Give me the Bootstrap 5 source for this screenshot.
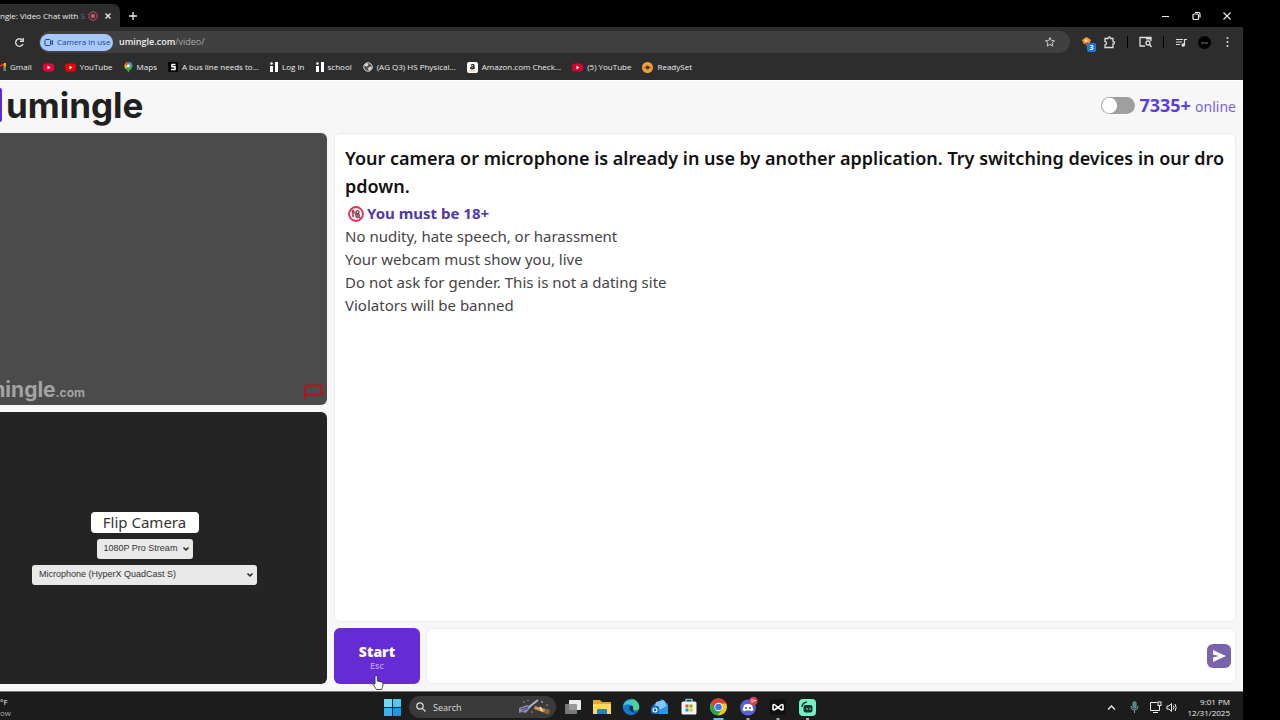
<!DOCTYPE html>
<html lang="en">
<head>
<meta charset="utf-8">
<meta name="viewport" content="width=device-width, initial-scale=1">
<title>umingle: Video Chat with Strangers</title>
<link href="https://cdn.jsdelivr.net/npm/bootstrap@5.3.0/dist/css/bootstrap.min.css" rel="stylesheet">
<style>
  body { background: #000; font-family: "Noto Sans", "Open Sans", sans-serif; }
  svg { display: block; flex: none; }
  button { border: 0; background: none; padding: 0; color: inherit; }
  a { color: inherit; text-decoration: none; }
  .screen { min-height: 100vh; margin-right: 37px; }

  /* browser chrome */
  .chrome { font-family: "Open Sans", "Noto Sans", sans-serif; font-size: 8px; line-height: 12px; color: #eee; }
  .tabstrip { height: 27px; background: #000; padding-top: 4px; }
  .tab { width: 120px; background: #2d2d2d; border-radius: 0 7px 0 0; padding-right: 7px; gap: 6px; }
  .tab-title { width: 82px; white-space: nowrap; font-weight: 500; }
  .winbtns { gap: 20px; padding-right: 11px; }
  .toolbar { height: 27px; background: #2d2d2d; padding: 3px 10px 0 14px; gap: 11px; }
  .address { background: #404040; border-radius: 12px; height: 22px; padding: 0 14px 0 1px; gap: 6px; margin-left: 3px; }
  .campill { background: #a8c7fa; color: #24498c; border-radius: 9px; height: 17px; padding: 0 4px; gap: 3px; width: 73px; }
  .url { font-size: 9px; }
  .url-path { color: #aaa; }
  .sep { width: 1px; height: 12px; background: #000; }
  .extbadge { right: -4px; bottom: -4px; background: #1f74e8; color: #fff; width: 9px; height: 9px; border-radius: 2px; font-size: 7px; line-height: 9px; font-weight: 700; text-align: center; }
  .bookmarks { height: 26px; background: #2d2d2d; gap: 11px; font-weight: 500; white-space: nowrap; }
  .bookmarks a { gap: 4px; }

  /* site */
  .site { background: #f7f7f7; border-top: 1px solid #fff; padding: 0 7px 7px 0; }
  .site-head { height: 52px; padding-bottom: 4px; }
  .logo-bar { width: 2px; height: 34px; background: #5a2bd8; border-radius: 0 2px 2px 0; }
  .logo-text { font-family: Inter, "Open Sans", sans-serif; font-weight: 700; font-size: 35px; line-height: 40px; color: #202020; }
  .switch { width: 34px !important; height: 17px; margin: 0 !important; border: 0; background-color: #9f9f9f; background-image: url("data:image/svg+xml,%3csvg xmlns='http://www.w3.org/2000/svg' viewBox='-4 -4 8 8'%3e%3ccircle r='3.6' fill='%23fff'/%3e%3c/svg%3e") !important; }
  .count { color: #5a3fd0; font-size: 18px; line-height: 24px; font-weight: 700; }
  .online { color: #7a62d8; font-size: 14px; line-height: 20px; }
  .main-area { gap: 7px; }
  .videos { width: 327px; gap: 7px; }
  .videos > div { flex: 1 1 50%; }
  .remote { background: #4b4b4b; border-radius: 0 6px 6px 0; padding: 0 4px 4px 0; }
  .watermark { width: 85px; font-family: Inter, sans-serif; color: #a3a3a3; font-weight: 700; font-size: 21px; line-height: 16px; white-space: nowrap; overflow-x: clip; }
  .watermark span { font-size: 12px; }
  .local { background: #242424; border-radius: 0 6px 6px 0; padding-right: 38px; gap: 6px; }
  .flip { background: #fff; color: #333; border-radius: 4px; width: 108px; height: 21px; font-size: 15px; line-height: 21px; }
  .picker { appearance: none; font-family: "Liberation Sans", Arial, sans-serif; font-size: 9px; height: 20px; border: 0; border-radius: 3px; color: #333; padding: 1px 7px 0; background: #e9e9e9 url("data:image/svg+xml,%3csvg xmlns='http://www.w3.org/2000/svg' viewBox='0 0 8 6' fill='none' stroke='%23222' stroke-width='1.5'%3e%3cpath d='M1.500 1.500L4 4l2.500-2.500'/%3e%3c/svg%3e") no-repeat right 3px center / 8px 6px; }
  .cam { width: 96px; }
  .mic { width: 225px; }
  .panel { background: #fff; border: 1px solid #ececec; border-radius: 6px; }
  .chat { padding: 10px; font-size: 15px; line-height: 23px; color: #444; }
  .alert-line { font-size: 18px; line-height: 28px; font-weight: 600; color: #111; word-break: break-all; }
  .rule { color: #4f38ae; font-weight: 700; gap: 3px; padding: 2px 0 0 3px; }
  .composer { height: 56px; gap: 6px; margin-top: 6px; }
  .start { width: 86px; background: #652bd5; border-radius: 6px; color: #fff; font-weight: 800; font-size: 14px; line-height: 16px; padding-top: 4px; font-family: "Open Sans", sans-serif; }
  .start small { font-size: 9px; line-height: 12px; color: #b89bee; font-weight: 600; }
  .message { border: 0; outline: 0; resize: none; background: transparent; }
  .send { width: 24px; height: 24px; background: #7b62ad; border-radius: 6px; margin-right: 4px; }
  .pointer { left: 38px; top: 46px; z-index: 2; }

  /* taskbar */
  .taskbar { height: 29px; background: #1c1c1c; border-top: 1px solid #777; color: #eee; font-size: 8px; line-height: 11px; font-family: "Open Sans", sans-serif; padding: 2px 13px 0 0; }
  .weather { flex: 0 0 384px; }
  .weather .dim { color: #aaa; }
  .apps { gap: 11px; }
  .searchbox { width: 147px; height: 22px; background: #3a3a3a; border-radius: 11px; padding: 0 3px 0 7px; gap: 7px; margin: 0 -3px; }
  .searchbox input { width: 78px; background: none; border: 0; padding: 0; color: #ddd; font-size: 9px; outline: 0; }
  .searchbox input::placeholder { color: #ddd; }
  .tray { gap: 10px; }
</style>
</head>
<body>
<div class="screen d-flex flex-column overflow-hidden">
  <header class="chrome">
    <div class="tabstrip d-flex">
      <div class="tab d-flex align-items-center">
        <div class="tab-title text-end">ngle: Video Chat with <span class="text-secondary">S</span></div>
        <svg width="10" height="10" viewBox="0 0 10 10"><circle cx="5" cy="5" r="4.2" fill="none" stroke="#c5566c"/><rect x="3" y="3" width="4" height="4" rx="1" fill="#c5566c"/></svg>
        <button aria-label="Close tab"><svg width="8" height="8" viewBox="0 0 8 8" stroke="#eee" stroke-width="1.3"><path d="M1.5 1.5l5 5m0-5l-5 5"/></svg></button>
      </div>
      <button class="ms-2" aria-label="New tab"><svg width="10" height="10" viewBox="0 0 10 10" stroke="#eee" stroke-width="1.3"><path d="M5 1v8M1 5h8"/></svg></button>
      <div class="winbtns d-flex align-items-center ms-auto">
        <button aria-label="Minimize"><svg width="11" height="10" viewBox="0 0 11 10" stroke="#eee"><path d="M2 5.5h7"/></svg></button>
        <button aria-label="Restore"><svg width="11" height="10" viewBox="0 0 11 10" stroke="#eee" fill="none" stroke-width="1.2"><rect x="2" y="3" width="5.5" height="5.5" rx="1"/><path d="M4 1.5h3.5a1.5 1.5 0 0 1 1.500 1.500v3.500"/></svg></button>
        <button aria-label="Close"><svg width="10" height="10" viewBox="0 0 10 10" stroke="#eee" stroke-width="1.1"><path d="M1.500 1.500l7 7m0-7l-7 7"/></svg></button>
      </div>
    </div>
    <div class="toolbar d-flex align-items-center">
      <button aria-label="Reload"><svg width="11" height="11" viewBox="0 0 11 11" fill="none" stroke="#ddd" stroke-width="1.400"><path d="M9 7a3.800 3.800 0 1 1-.6-3.900"/><path d="M9.200 1v3.300H6" /></svg></button>
      <div class="address d-flex align-items-center flex-grow-1">
        <button class="campill d-flex align-items-center text-nowrap"><svg width="10" height="9" viewBox="0 0 10 9" fill="none" stroke="#24498c"><rect x="1" y="1.500" width="5.500" height="6" rx="1"/><path d="M6.500 4l2-1.500v4L6.500 5"/></svg>Camera in use</button>
        <div class="url flex-grow-1"><span class="fw-semibold">umingle.com</span><span class="url-path">/video/</span></div>
        <button aria-label="Bookmark"><svg width="12" height="12" viewBox="0 0 12 12" fill="none" stroke="#ccc"><path d="M6 1.500l1.300 3 3.200.3-2.400 2.100.7 3.200L6 8.400l-2.800 1.700.7-3.200-2.400-2.100 3.200-.3z"/></svg></button>
      </div>
      <button class="position-relative" aria-label="Extension"><svg width="11" height="11" viewBox="0 0 11 11"><path d="M5.500 0L10 3 8 7H3L1 3z" fill="#f0a42c"/><path d="M3 4l3 6 2-4z" fill="#d8452f"/><circle cx="5" cy="4" r="1.500" fill="#ffe08a"/></svg><span class="extbadge position-absolute">3</span></button>
      <button aria-label="Extensions"><svg width="13" height="13" viewBox="0 0 13 13" fill="none" stroke="#ddd" stroke-width="1.300"><path d="M2 2.500h3c0-2 2.500-2 2.500 0H10v3c2 0 2 2.500 0 2.500v3.500H2V9c2 0 2-3.500 0-3.500z"/></svg></button>
      <span class="sep"></span>
      <button aria-label="Side search"><svg width="13" height="12" viewBox="0 0 13 12" fill="none" stroke="#ddd" stroke-width="1.300"><path d="M6 10H1V1.500h11V5"/><path d="M7 2.500h5" stroke-width="2"/><circle cx="9" cy="7" r="2"/><path d="M10.500 8.500l2 2.500"/></svg></button>
      <span class="sep"></span>
      <button aria-label="Media"><svg width="12" height="11" viewBox="0 0 12 11" fill="none" stroke="#ddd" stroke-width="1.200"><path d="M1 2.500h7M1 5h6M1 7.500h4M9.500 8V2.500H12"/><circle cx="8.300" cy="8" r="1.200" fill="#ddd"/></svg></button>
      <button aria-label="Profile"><svg width="13" height="13" viewBox="0 0 13 13"><circle cx="6.500" cy="6.500" r="6.500" fill="#000"/><path d="M3 7h7" stroke="#777"/></svg></button>
      <button aria-label="Menu"><svg width="11" height="12" viewBox="0 0 11 12" fill="#ddd"><circle cx="5.500" cy="2" r="1"/><circle cx="5.500" cy="6" r="1"/><circle cx="5.500" cy="10" r="1"/></svg></button>
    </div>
    <nav class="bookmarks d-flex align-items-center">
      <a href="#" class="d-flex align-items-center"><svg width="6" height="9" viewBox="0 0 6 9"><path d="M0 3l4-2v7" fill="none" stroke="#e34133" stroke-width="1.500"/><path d="M5 1v7" stroke="#34a853" stroke-width="2"/><path d="M4 0h2v3l-2 1z" fill="#fbbc04"/></svg>Gmail</a>
      <a href="#" aria-label="YouTube home"><svg width="11" height="9" viewBox="0 0 11 9"><rect y=".5" width="11" height="8" rx="2.500" fill="#e0063c"/><path d="M4.500 2.700v3.600l3-1.800z" fill="#fff"/></svg></a>
      <a href="#" class="d-flex align-items-center"><svg width="11" height="9" viewBox="0 0 11 9"><rect y=".5" width="11" height="8" rx="2.500" fill="#e00"/><path d="M4.500 2.700v3.600l3-1.800z" fill="#fff"/></svg>YouTube</a>
      <a href="#" class="d-flex align-items-center"><svg width="9" height="11" viewBox="0 0 9 11"><path d="M4.500 11C4 8 .500 7 .500 4a4 4 0 0 1 8 0c0 3-3.500 4-4 7z" fill="#34a853"/><path d="M.5 4a4 4 0 0 1 2-3.400L5 3 2 7Q.500 6 .500 4z" fill="#fbbc04"/><path d="M1 2.200A4 4 0 0 1 5 0L3 4z" fill="#ea4335"/><path d="M5 0a4 4 0 0 1 3.300 2.600L5 5z" fill="#4285f4"/><circle cx="4.500" cy="4" r="1.400" fill="#fff"/></svg>Maps</a>
      <a href="#" class="d-flex align-items-center"><svg width="10" height="10" viewBox="0 0 10 10"><rect width="10" height="10" rx="1" fill="#000"/><path d="M7.500 2.500H4v2.200h3v2.800H3" fill="none" stroke="#fff" stroke-width="1.500"/></svg>A bus line needs to...</a>
      <a href="#" class="d-flex align-items-center"><svg width="8" height="10" viewBox="0 0 8 10" fill="#fff"><circle cx="1.500" cy="1.500" r="1.300"/><path d="M0 4h3v6H0zM5 0h3v10H5z"/></svg>Log In</a>
      <a href="#" class="d-flex align-items-center"><svg width="8" height="10" viewBox="0 0 8 10" fill="#fff"><circle cx="1.500" cy="1.500" r="1.300"/><path d="M0 4h3v6H0zM5 0h3v10H5z"/></svg>school</a>
      <a href="#" class="d-flex align-items-center"><svg width="10" height="10" viewBox="0 0 10 10"><circle cx="5" cy="5" r="4.300" fill="#555" stroke="#ccc"/><path d="M1 3.500l3 1 1.500-2L4 1zM5 6l3-1.500L9 6 6 9z" fill="#ddd"/></svg>(AG Q3) HS Physical...</a>
      <a href="#" class="d-flex align-items-center"><svg width="11" height="11" viewBox="0 0 11 11"><rect width="11" height="11" rx="2" fill="#fff"/><path d="M3.800 3.200Q7 1.500 7 4v3M7 4.700Q3.500 4.500 3.700 6.200q.8 1.500 3.300-.3" fill="none" stroke="#111" stroke-width="1.200"/><path d="M2.500 9h6" stroke="#d9a06b" stroke-width=".8"/></svg>Amazon.com Check...</a>
      <a href="#" class="d-flex align-items-center"><svg width="11" height="9" viewBox="0 0 11 9"><rect y=".5" width="11" height="8" rx="2.500" fill="#d00430"/><path d="M4.500 2.700v3.600l3-1.800z" fill="#fff"/></svg>(5) YouTube</a>
      <a href="#" class="d-flex align-items-center"><svg width="11" height="11" viewBox="0 0 11 11"><circle cx="5.500" cy="5.500" r="5.500" fill="#eba03d"/><circle cx="5.500" cy="5.500" r="2" fill="#633713"/><path d="M1.500 5.500h8" stroke="#633713" stroke-width=".5"/></svg>ReadySet</a>
    </nav>
  </header>

  <main class="site d-flex flex-column flex-grow-1">
    <div class="site-head d-flex align-items-center">
      <div class="d-flex align-items-center gap-1"><span class="logo-bar"></span><span class="logo-text">umingle</span></div>
      <div class="form-check form-switch d-flex align-items-center ms-auto p-0 m-0 gap-1">
        <input class="form-check-input switch" type="checkbox" role="switch" id="mode" aria-label="Mode">
        <label for="mode" class="text-nowrap"><span class="count">7335+</span> <span class="online">online</span></label>
      </div>
    </div>
    <div class="main-area d-flex flex-grow-1">
      <section class="videos d-flex flex-column flex-shrink-0">
        <div class="remote d-flex align-items-end justify-content-between">
          <div class="watermark d-flex justify-content-end align-items-baseline">mingle<span>.com</span></div>
          <button aria-label="Report"><svg width="20" height="18" viewBox="0 0 20 18" fill="none" stroke="#b3131f" stroke-width="2"><path d="M2 17v-5V4q0-1.500 1.500-1.500H18q1 0 .7 1L18 7l1 4q.2 1-1 1H2"/></svg></button>
        </div>
        <div class="local d-flex flex-column align-items-center justify-content-center">
          <button class="flip">Flip Camera</button>
          <select class="picker cam" aria-label="Camera"><option>1080P Pro Stream</option></select>
          <select class="picker mic" aria-label="Microphone"><option>Microphone (HyperX QuadCast S)</option></select>
        </div>
      </section>
      <section class="d-flex flex-column flex-grow-1">
        <div class="panel chat flex-grow-1">
          <div class="alert-line">Your camera or microphone is already in use by another application. Try switching devices in our dropdown.</div>
          <div class="rule d-flex align-items-center"><svg width="16" height="16" viewBox="0 0 16 16"><circle cx="8" cy="8" r="7" fill="#fbe9ee" stroke="#dc3559" stroke-width="1.800"/><path d="M4 6l1-1v6" stroke="#333" fill="none" stroke-width="1.200"/><g fill="none" stroke="#333" stroke-width="1.100"><circle cx="9.500" cy="6.300" r="1.500"/><circle cx="9.500" cy="9.600" r="1.800"/></g><path d="M3 3l10 10" stroke="#dc3559" stroke-width="1.500"/></svg>You must be 18+</div>
          <div>No nudity, hate speech, or harassment</div>
          <div>Your webcam must show you, live</div>
          <div>Do not ask for gender. This is not a dating site</div>
          <div>Violators will be banned</div>
        </div>
        <div class="composer d-flex position-relative">
          <button class="start d-flex flex-column align-items-center justify-content-center">Start<small>Esc</small></button>
          <svg class="pointer position-absolute" width="12" height="16" viewBox="0 0 12 16"><path d="M3 9V2.500a1.200 1.200 0 0 1 2.300 0V7l4.500 1q1.500.5 1.300 2.200l-.8 3.500-.8 1.800H4.600L1 10.500Q.6 9 3 10z" fill="#fff" stroke="#222" stroke-width=".8"/></svg>
          <div class="panel d-flex flex-grow-1 align-items-center">
            <textarea class="message flex-grow-1 h-100" aria-label="Message"></textarea>
            <button class="send d-flex align-items-center justify-content-center" aria-label="Send"><svg width="14" height="12" viewBox="0 0 14 12"><path d="M1 0l13 6L1 12V7.500L7 6 1 4.500z" fill="#fff"/></svg></button>
          </div>
        </div>
      </section>
    </div>
  </main>

  <footer class="taskbar d-flex align-items-center">
    <div class="weather"><div>°F</div><div class="dim">ow</div></div>
    <div class="apps d-flex align-items-center">
      <button aria-label="Windows"><svg width="17" height="17" viewBox="0 0 17 17"><path d="M0 0h8v8H0z" fill="#6bdcf8"/><path d="M9 0h8v8H9z" fill="#4fcaf2"/><path d="M0 9h8v8H0z" fill="#33b4ec"/><path d="M9 9h8v8H9z" fill="#159be2"/></svg></button>
      <div class="searchbox d-flex align-items-center"><svg width="10" height="10" viewBox="0 0 10 10" fill="none" stroke="#ddd" stroke-width="1.200"><circle cx="4" cy="4" r="3.200"/><path d="M6.400 6.400L9.500 9.500"/></svg><input type="search" placeholder="Search" aria-label="Search">
        <svg width="33" height="16" viewBox="0 0 33 16"><path d="M1 9l8-3 4 2-5 6-4-1-3 1z" fill="#9287b4"/><path d="M3 10l7-2M4 12l6-3" stroke="#514570"/><path d="M11 8L20 1" stroke="#aeb2cc" stroke-width="2"/><path d="M17 7l14 4-1 4-14-5z" fill="#c69a50"/><path d="M22 8l2 4" stroke="#f2d89b" stroke-width="2"/><path d="M27 10l5 1-1 4-5-1z" fill="#8e6131"/><g fill="#a892d0"><circle cx="6" cy="3" r=".8"/><circle cx="10" cy="1.500" r=".7"/><circle cx="24" cy="3" r="1"/><circle cx="29" cy="6" r=".8"/><circle cx="14" cy="13" r=".8"/></g></svg></div>
      <button aria-label="Task view"><svg width="18" height="16" viewBox="0 0 18 16"><rect x="5" y="1" width="12" height="10" rx="1" fill="#eee"/><rect x="1" y="5" width="12" height="10" rx="1" fill="#8a8a8a" opacity=".85"/></svg></button>
      <button aria-label="Files"><svg width="18" height="16" viewBox="0 0 18 16"><path d="M0 1h7l2 2h9v12H0z" fill="#e3a92c"/><path d="M0 5h18v10H0z" fill="#ffd766"/><path d="M4 15v-4q0-1 1-1h8q1 0 1 1v4z" fill="#2581c8"/></svg></button>
      <button aria-label="Edge"><svg width="18" height="18" viewBox="0 0 18 18"><circle cx="9" cy="9" r="8.300" fill="#1577cf"/><path d="M1 8a8.300 8.300 0 0 1 16.300 1c0 4-5 4-6 2 1-4-5-6-10.300-3z" fill="#45c9c1"/><path d="M9 .7a8.300 8.300 0 0 1 8.300 8.300c0 4-5 4-6 2Q13 4 9 .7z" fill="#5cd683" opacity=".7"/><path d="M11 8.500q-2-1.500-3.500.5c-1 3 2 6 7 5.500-3-.2-4-2-3.500-3.500" fill="#1c1c1c" opacity=".75"/></svg></button>
      <button aria-label="Mail"><svg width="18" height="16" viewBox="0 0 18 16"><path d="M2 6l9-6 6 5v10H5z" fill="#1e73db"/><path d="M5 3l8-2 3 6-7 4-5-4z" fill="#7dc9f9"/><path d="M3 7l7 4 7-5v9H5z" fill="#2f94ed"/><rect x="0" y="7" width="8" height="8" rx="2" fill="#1265bb"/><circle cx="4" cy="11" r="2" fill="none" stroke="#fff" stroke-width="1.200"/></svg></button>
      <button aria-label="Store"><svg width="18" height="18" viewBox="0 0 18 18"><path d="M6 5V1.500h6V5" fill="none" stroke="#66c8e8" stroke-width="1.500"/><rect x="1.500" y="3.500" width="15" height="13" rx="1.500" fill="#f2f2f2"/><path d="M5.500 6.500H8.500v3H5.500z" fill="#f25022"/><path d="M9.500 6.500h3v3h-3z" fill="#7fba00"/><path d="M5.500 10.500h3v3h-3z" fill="#00a4ef"/><path d="M9.500 10.500h3v3h-3z" fill="#ffb900"/></svg></button>
      <button aria-label="Chrome"><svg width="19" height="27" viewBox="0 -4 19 27"><circle cx="9.500" cy="9" r="8.500" fill="#f9c51d"/><path d="M9.500 9L2.100 4.700A8.500 8.500 0 0 0 8.500 17.400l4.700-6z" fill="#2ca54c"/><path d="M2.100 4.700A8.500 8.500 0 0 1 17.300 5.500H9.500L6 11z" fill="#e23d30"/><circle cx="9.500" cy="9" r="4.200" fill="#fff"/><circle cx="9.500" cy="9" r="3.300" fill="#3e79e6"/><path d="M4.500 21h10" stroke="#67bfee" stroke-width="2"/></svg></button>
      <button aria-label="Discord"><svg width="19" height="27" viewBox="0 -4 19 27"><circle cx="9" cy="9.500" r="8" fill="#5560dc"/><path d="M5 7q4-2 8 0l1.500 5q-2 2-3 .5H6.500q-1 1.500-3-.5z" fill="#fff"/><circle cx="7" cy="10" r="1.100" fill="#5560dc"/><circle cx="11" cy="10" r="1.100" fill="#5560dc"/><circle cx="14.500" cy="3" r="4.200" fill="#d54049"/><text x="14.500" y="5" font-size="5" fill="#fff" text-anchor="middle">9+</text><path d="M7.500 21h3" stroke="#aaa" stroke-width="2"/></svg></button>
      <button aria-label="Capcut"><svg width="18" height="27" viewBox="0 -4 18 27"><rect x="1" y="1" width="16" height="16" rx="3" fill="#111"/><path d="M4 11.500V7q1-1 2 0l3 2.500L12 7q1-1 2 0v4.500q-1 .8-2 0L9 9.500 6 11.500q-1 .8-2 0z" fill="none" stroke="#fff" stroke-width="1.600"/><path d="M7.500 21h3" stroke="#aaa" stroke-width="2"/></svg></button>
      <button aria-label="Streamlabs"><svg width="19" height="27" viewBox="0 -4 19 27"><rect x="1" y="1" width="17" height="17" rx="4" fill="#75f0c3"/><path d="M4 9q0-4 5-5" fill="none" stroke="#15342c" stroke-width="1.500"/><rect x="5.500" y="7" width="9" height="7.500" rx="2" fill="#15342c"/><path d="M9 10v2M12 10v2" stroke="#75f0c3"/><path d="M8 21h3" stroke="#aaa" stroke-width="2"/></svg></button>
    </div>
    <div class="tray d-flex align-items-center ms-auto">
      <svg class="me-1" width="9" height="7" viewBox="0 0 9 7" fill="none" stroke="#eee" stroke-width="1.300"><path d="M1 5.500l3.500-3.500L8 5.500"/></svg>
      <svg width="9" height="12" viewBox="0 0 9 12" fill="none" stroke="#6fa9a9"><rect x="3" y=".7" width="3" height="6.500" rx="1.500" fill="#477"/><path d="M1 5q0 4 3.500 4T8 5M4.500 9v3"/></svg>
      <div class="d-flex align-items-center gap-1">
        <svg width="13" height="12" viewBox="0 0 13 12" fill="none" stroke="#eee"><path d="M8 1.500H1.500v8h9V5M4 11.500h5"/><rect x="9" y="1" width="3" height="3.500"/></svg>
        <svg width="12" height="11" viewBox="0 0 12 11" fill="none" stroke="#eee"><path d="M1 4h2l2.500-2.500v8L3 7H1zM7.300 3.500q1.300 2 0 4M9 2q2.300 3.500 0 7"/></svg>
      </div>
      <div class="text-end">9:01 PM<br>12/31/2025</div>
    </div>
  </footer>
</div>
<script src="https://cdn.jsdelivr.net/npm/bootstrap@5.3.0/dist/js/bootstrap.bundle.min.js"></script>
</body>
</html>
